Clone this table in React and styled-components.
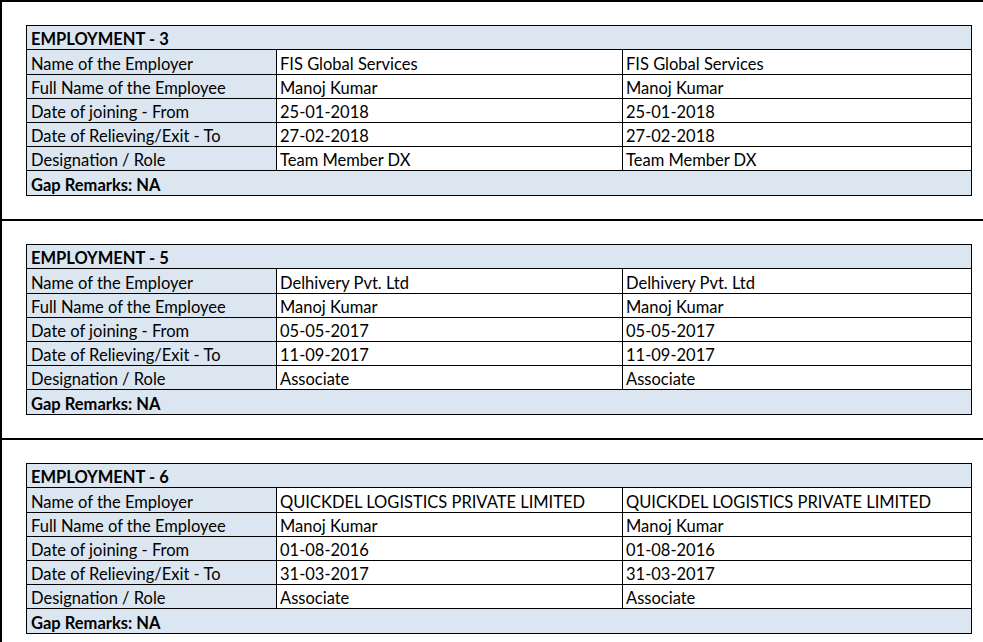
import styled, { createGlobalStyle } from "styled-components";

const GlobalStyle = createGlobalStyle`
  html, body {
    margin: 0;
    padding: 0;
    background: #fff;
  }
  body {
    font-family: Lato, "Liberation Sans", sans-serif;
    color: #000;
  }
`;

const Frame = styled.div`
  width: 981px;
  height: 640px;
  border-top: 2px solid #000;
  border-left: 2px solid #000;
  overflow: hidden;
`;

const Panel = styled.section`
  padding: 23px 0 23px 24px;
  border-bottom: 2px solid #000;
`;

const Sheet = styled.div`
  display: grid;
  width: 945px;
  grid-template-columns: 250px 346px 349px;
  grid-template-rows: 24px 25px 24px 24px 24px 24px 25px;
  border-top: 1px solid #000;
  border-left: 1px solid #000;
  font-size: 16.5px;
`;

const Cell = styled.div`
  display: flex;
  align-items: flex-end;
  padding: 0 0 2px 4px;
  border-right: 1px solid #000;
  border-bottom: 1px solid #000;
  white-space: nowrap;
  overflow: hidden;
  line-height: 1;
  background: ${p => (p.$shaded ? "#dce6f1" : "#fff")};
`;

const BandCell = styled(Cell)`
  grid-column: 1 / -1;
  font-weight: 700;
  background: #dce6f1;
`;

const ValueCell = styled(Cell)`
  padding-left: 3px;
`;

const employments = [
  {
    no: 3,
    employer: "FIS Global Services",
    name: "Manoj Kumar",
    from: "25-01-2018",
    to: "27-02-2018",
    role: "Team Member DX",
  },
  {
    no: 5,
    employer: "Delhivery Pvt. Ltd",
    name: "Manoj Kumar",
    from: "05-05-2017",
    to: "11-09-2017",
    role: "Associate",
  },
  {
    no: 6,
    employer: "QUICKDEL LOGISTICS PRIVATE LIMITED",
    name: "Manoj Kumar",
    from: "01-08-2016",
    to: "31-03-2017",
    role: "Associate",
  },
];

const fields = [
  ["Name of the Employer", "employer"],
  ["Full Name of the Employee", "name"],
  ["Date of joining - From", "from"],
  ["Date of Relieving/Exit - To", "to"],
  ["Designation / Role", "role"],
];

function EmploymentTable({ data }) {
  return (
    <Sheet>
      <BandCell>EMPLOYMENT - {data.no}</BandCell>
      {fields.map(([label, key]) => (
        <Row key={key} label={label} value={data[key]} />
      ))}
      <BandCell>Gap Remarks: NA</BandCell>
    </Sheet>
  );
}

function Row({ label, value }) {
  return (
    <>
      <Cell $shaded>{label}</Cell>
      <ValueCell>{value}</ValueCell>
      <ValueCell>{value}</ValueCell>
    </>
  );
}

export default function App() {
  return (
    <>
      <GlobalStyle />
      <Frame>
        {employments.map(e => (
          <Panel key={e.no}>
            <EmploymentTable data={e} />
          </Panel>
        ))}
      </Frame>
    </>
  );
}
